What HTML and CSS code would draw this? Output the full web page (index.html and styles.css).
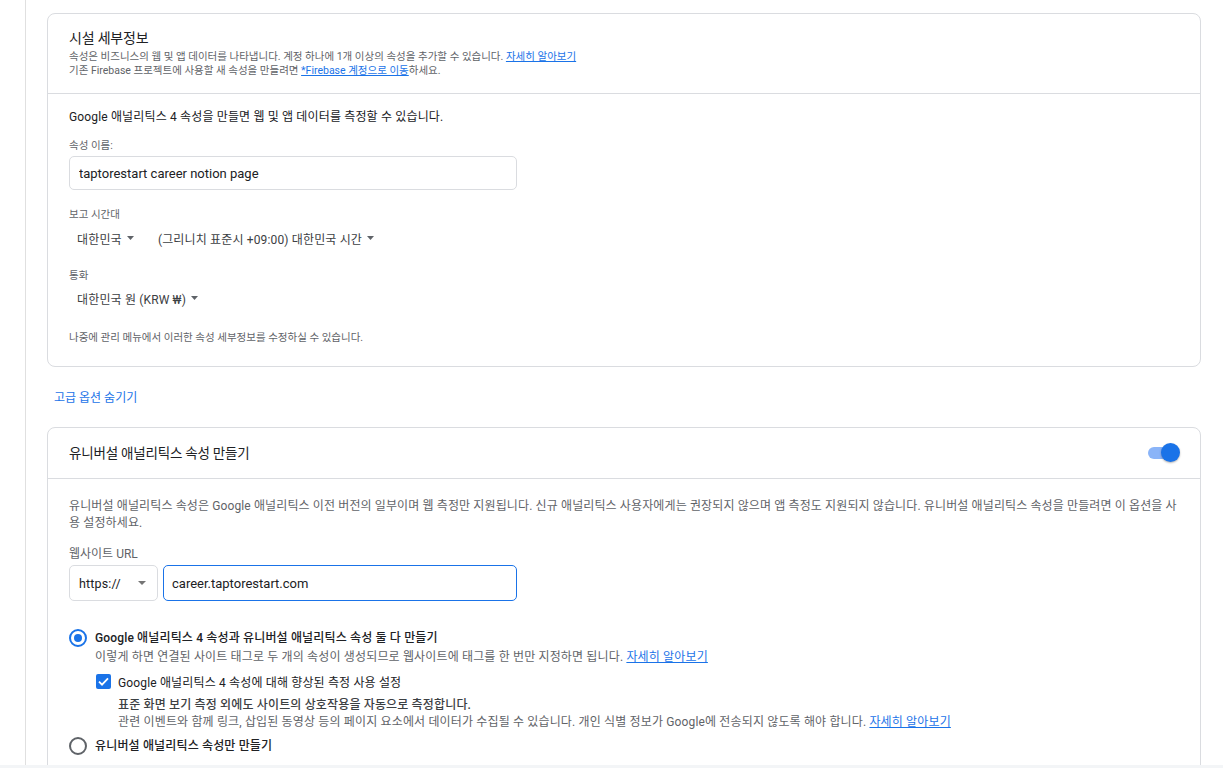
FILE: index.html
```html
<!DOCTYPE html>
<html lang="ko">
<head>
  <meta charset="UTF-8">
  <meta name="viewport" content="width=device-width, initial-scale=1.0">
  <title>속성 만들기</title>
  <link rel="stylesheet" href="styles.css">
</head>
<body>
  <div class="page">
    <div class="rail"></div>
    <main class="content">
      <section class="card">
        <header class="card-head">
          <h2 class="card-title">시설 세부정보</h2>
          <p class="head-note">속성은 비즈니스의 웹 및 앱 데이터를 나타냅니다. 계정 하나에 1개 이상의 속성을 추가할 수 있습니다. <a href="#">자세히 알아보기</a></p>
          <p class="head-note">기존 Firebase 프로젝트에 사용할 새 속성을 만들려면 <a href="#">*Firebase 계정으로 이동</a>하세요.</p>
        </header>
        <div class="card-body">
          <p class="lead">Google 애널리틱스 4 속성을 만들면 웹 및 앱 데이터를 측정할 수 있습니다.</p>
          <div class="field-label first">속성 이름:</div>
          <input class="name-input" type="text" value="taptorestart career notion page">

          <div class="field-label">보고 시간대</div>
          <div class="select-row">
            <div class="dropdown">대한민국 <svg class="caret" width="7" height="4" viewBox="0 0 7 4"><path d="M0 0h7L3.5 4z" fill="#5f6368"/></svg></div>
            <div class="dropdown">(그리니치 표준시 +09:00) 대한민국 시간 <svg class="caret" width="7" height="4" viewBox="0 0 7 4"><path d="M0 0h7L3.5 4z" fill="#5f6368"/></svg></div>
          </div>

          <div class="field-label currency-label">통화</div>
          <div class="select-row currency-row">
            <div class="dropdown">대한민국 원 (KRW ₩) <svg class="caret" width="7" height="4" viewBox="0 0 7 4"><path d="M0 0h7L3.5 4z" fill="#5f6368"/></svg></div>
          </div>

          <p class="card-note">나중에 관리 메뉴에서 이러한 속성 세부정보를 수정하실 수 있습니다.</p>
        </div>
      </section>

      <a class="advanced-link" href="#">고급 옵션 숨기기</a>

      <section class="card">
        <header class="card-head switch-head">
          <h2 class="card-title">유니버설 애널리틱스 속성 만들기</h2>
          <div class="toggle">
            <span class="toggle-track"></span>
            <span class="toggle-thumb"></span>
          </div>
        </header>
        <div class="card-body ua-body">
          <p class="desc">유니버설 애널리틱스 속성은 Google 애널리틱스 이전 버전의 일부이며 웹 측정만 지원됩니다. 신규 애널리틱스 사용자에게는 권장되지 않으며 앱 측정도 지원되지 않습니다. 유니버설 애널리틱스 속성을 만들려면 이 옵션을 사용 설정하세요.</p>

          <div class="url-label">웹사이트 URL</div>
          <div class="url-row">
            <div class="scheme">https:// <svg class="caret" width="8" height="4" viewBox="0 0 8 4"><path d="M0 0h8L4 4z" fill="#757575"/></svg></div>
            <input class="url-input" type="text" value="career.taptorestart.com">
          </div>

          <div class="option first-option">
            <span class="radio checked"></span>
            <div class="option-main">
              <div class="option-label">Google 애널리틱스 4 속성과 유니버설 애널리틱스 속성 둘 다 만들기</div>
              <div class="option-sub">이렇게 하면 연결된 사이트 태그로 두 개의 속성이 생성되므로 웹사이트에 태그를 한 번만 지정하면 됩니다. <a href="#">자세히 알아보기</a></div>
              <div class="check-row">
                <span class="checkbox"><svg width="11" height="9" viewBox="0 0 11 9"><path d="M1 4.6l3 3L10 1.4" fill="none" stroke="#fff" stroke-width="1.8"/></svg></span>
                <span class="check-label">Google 애널리틱스 4 속성에 대해 향상된 측정 사용 설정</span>
              </div>
              <div class="check-detail">
                <div class="detail-strong">표준 화면 보기 측정 외에도 사이트의 상호작용을 자동으로 측정합니다.</div>
                <div class="detail-muted">관련 이벤트와 함께 링크, 삽입된 동영상 등의 페이지 요소에서 데이터가 수집될 수 있습니다. 개인 식별 정보가 Google에 전송되지 않도록 해야 합니다. <a href="#">자세히 알아보기</a></div>
              </div>
            </div>
          </div>

          <div class="option second-option">
            <span class="radio"></span>
            <div class="option-main">
              <div class="option-label">유니버설 애널리틱스 속성만 만들기</div>
            </div>
          </div>
        </div>
      </section>
    </main>
  </div>
  <div class="bottom-strip"></div>
</body>
</html>
```

FILE: styles.css
```css
* {
  box-sizing: border-box;
}
html, body {
  margin: 0;
  padding: 0;
}
body {
  font-family: Roboto, "Noto Sans CJK KR", sans-serif;
  font-size: 12px;
  letter-spacing: 0.15px;
  color: #202124;
  background-color: #fff;
}
a {
  color: #1a73e8;
  text-decoration: underline;
}
p {
  margin: 0;
}
.page {
  display: flex;
  height: 765px;
  overflow: hidden;
}
.rail {
  flex: none;
  width: 26px;
  border-right: 1px solid #e0e0e0;
}
.content {
  flex: 1;
  padding: 13px 22px 0 21px;
}
.card {
  border: 1px solid #dadce0;
  border-radius: 8px;
}
.card-head {
  padding: 14px 21px 15px;
  border-bottom: 1px solid #dadce0;
}
.card-title {
  margin: 0;
  font-size: 14px;
  font-weight: 400;
  line-height: 20px;
  letter-spacing: -0.2px;
  color: #202124;
}
.head-note {
  font-size: 10.5px;
  line-height: 14px;
  letter-spacing: 0;
  color: #5f6368;
}
.card-title + .head-note {
  margin-top: 2px;
}
.card-body {
  padding: 14px 21px 21px;
}
.lead {
  font-size: 12px;
  line-height: 18px;
  color: #202124;
}
.field-label {
  margin-top: 18px;
  font-size: 10.5px;
  line-height: 14px;
  letter-spacing: 0;
  color: #5f6368;
}
.field-label.first {
  margin-top: 13px;
}
.field-label.currency-label {
  margin-top: 21px;
}
.name-input {
  display: block;
  width: 448px;
  height: 34px;
  margin-top: 3px;
  padding: 0 9px;
  border: 1px solid #dadce0;
  border-radius: 5px;
  font-family: Roboto, "Noto Sans CJK KR", sans-serif;
  font-size: 13px;
  color: #202124;
  outline: none;
}
.select-row {
  display: flex;
  align-items: center;
  gap: 8px;
  height: 20px;
  margin-top: 6px;
}
.select-row.currency-row {
  margin-top: 5px;
}
.dropdown {
  display: inline-flex;
  align-items: center;
  padding: 0 8px;
  font-size: 12px;
  color: #3c4043;
  white-space: pre;
}
.dropdown .caret {
  margin-left: 2px;
}
.card-note {
  margin-top: 23px;
  font-size: 10.5px;
  line-height: 14px;
  letter-spacing: 0;
  color: #5f6368;
}
.advanced-link {
  display: block;
  margin: 23px 0 21px 7px;
  font-size: 12px;
  line-height: 16px;
  letter-spacing: 0;
  text-decoration: none;
}
.switch-head {
  display: flex;
  align-items: center;
  justify-content: space-between;
  height: 51px;
  padding: 0 19px 0 21px;
}
.switch-head .card-title {
  font-size: 13.5px;
}
.toggle {
  position: relative;
  width: 33px;
  height: 20px;
}
.toggle-track {
  position: absolute;
  left: 0;
  top: 4px;
  width: 28px;
  height: 12px;
  border-radius: 6px;
  background-color: #8ab4f8;
}
.toggle-thumb {
  position: absolute;
  right: 1px;
  top: 0;
  width: 19px;
  height: 19px;
  border-radius: 50%;
  background-color: #1a73e8;
  box-shadow: 0 1px 2px rgba(0, 0, 0, 0.3);
}
.ua-body {
  padding-top: 19px;
}
.desc {
  font-size: 12px;
  line-height: 17px;
  letter-spacing: 0.12px;
  word-break: break-all;
  color: #5f6368;
}
.url-label {
  margin-top: 14px;
  font-size: 12px;
  line-height: 16px;
  letter-spacing: 0;
  color: #5f6368;
}
.url-row {
  display: flex;
  gap: 5px;
  margin-top: 3px;
}
.scheme {
  display: flex;
  align-items: center;
  justify-content: space-between;
  width: 89px;
  height: 36px;
  padding: 0 11px 0 9px;
  border: 1px solid #dadce0;
  border-radius: 5px;
  font-size: 12.5px;
  color: #202124;
}
.url-input {
  width: 354px;
  height: 36px;
  padding: 0 8px;
  border: 1px solid #1a73e8;
  border-radius: 5px;
  font-family: Roboto, "Noto Sans CJK KR", sans-serif;
  font-size: 13px;
  color: #202124;
  outline: none;
}
.option {
  display: flex;
  align-items: flex-start;
  gap: 8px;
}
.first-option {
  margin-top: 28px;
}
.second-option {
  margin-top: 7px;
}
.radio {
  flex: none;
  display: flex;
  align-items: center;
  justify-content: center;
  width: 18px;
  height: 18px;
  border: 2px solid #5f6368;
  border-radius: 50%;
}
.radio.checked {
  border-color: #1a73e8;
}
.radio.checked::after {
  content: "";
  width: 8px;
  height: 8px;
  border-radius: 50%;
  background-color: #1a73e8;
}
.option-label {
  font-size: 12px;
  line-height: 18px;
  font-weight: 500;
  color: #202124;
}
.option-sub {
  margin-top: 1px;
  font-size: 12px;
  line-height: 18px;
  color: #5f6368;
}
.check-row {
  display: flex;
  align-items: center;
  gap: 7px;
  height: 18px;
  margin-top: 6px;
  padding-left: 1px;
}
.checkbox {
  display: flex;
  align-items: center;
  justify-content: center;
  width: 15px;
  height: 15px;
  border-radius: 2px;
  background-color: #1a73e8;
}
.check-label {
  font-size: 12px;
  color: #202124;
}
.check-detail {
  margin-top: 6px;
  padding-left: 23px;
}
.detail-strong {
  font-size: 12px;
  line-height: 18px;
  font-weight: 500;
  color: #3c4043;
}
.detail-muted {
  font-size: 12px;
  line-height: 16px;
  color: #5f6368;
}
.bottom-strip {
  height: 3px;
  background-color: #f3f5f7;
}
```
